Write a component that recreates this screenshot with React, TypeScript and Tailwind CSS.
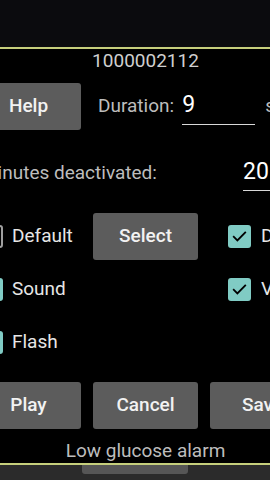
const Check = ({ on }: { on: boolean }) =>
  on ? (
    <div className="flex h-[23px] w-[23px] shrink-0 items-center justify-center rounded-[3px] bg-[#80cbc4]">
      <svg width="17" height="17" viewBox="0 0 24 24">
        <path d="M4 12.5l5 5L20 6.5" fill="none" stroke="#000" strokeWidth="2.6" strokeLinecap="square" />
      </svg>
    </div>
  ) : (
    <div className="h-[23px] w-[23px] shrink-0 rounded-[3px] border-2 border-[#9e9e9e]" />
  );

const Btn = ({ label }: { label: string }) => (
  <div className="flex h-[47px] w-[105px] shrink-0 items-center justify-center rounded-[3px] bg-[#5c5c5c] text-[19px] font-medium text-[#f2f2f2]">
    {label}
  </div>
);

export default function App() {
  return (
    <div
      className="h-[480px] w-[270px] overflow-hidden bg-black"
      style={{ fontFamily: "Roboto, 'Noto Sans', sans-serif" }}
    >
      <div className="h-[47px] bg-[#0b0b0e]" />
      <div className="h-[2px] bg-[#c6cf7c]" />
      <div className="ml-[-24px] w-[339px]">
        <div className="h-[24px] text-center text-[19px] leading-[24px] text-[#cfcfcf]">
          1000002112
        </div>

        {/* duration */}
        <div className="mt-[10px] flex h-[47px] items-start">
          <Btn label="Help" />
          <span className="ml-[17px] mt-[11px] shrink-0 text-[19px] leading-[24px] text-[#bdbdbd]">Duration:</span>
          <div className="ml-[8px] mt-[8px] w-[73px] shrink-0 border-b-[1.5px] border-[#d8d8d8] pb-[5px] text-[23px] leading-[28px] text-white">
            9
          </div>
          <span className="ml-[10px] mt-[11px] shrink-0 text-[19px] leading-[24px] text-[#bdbdbd]">sec</span>
        </div>

        <div className="mt-[20px] flex h-[46px] items-start">
          <span className="ml-[5px] mt-[11px] w-[238px] shrink-0 text-[19px] leading-[24px] text-[#bdbdbd]">
            Minutes deactivated:
          </span>
          <div className="ml-[24px] mt-[8px] w-[70px] shrink-0 border-b-[1.5px] border-[#d8d8d8] pb-[4px] text-[23px] leading-[28px] text-white">
            20
          </div>
        </div>

        {/* options */}
        <div className="mt-[14px] flex h-[53px] items-center">
          <div className="ml-[4px]">
            <Check on={false} />
          </div>
          <span className="ml-[9px] w-[81px] shrink-0 text-[19px] text-[#e6e6e6]">Default</span>
          <Btn label="Select" />
          <div className="ml-[30px]">
            <Check on />
          </div>
          <span className="ml-[10px] shrink-0 text-[19px] text-[#e6e6e6]">Display</span>
        </div>
        <div className="flex h-[53px] items-center">
          <div className="ml-[4px]">
            <Check on />
          </div>
          <span className="ml-[9px] w-[216px] shrink-0 text-[19px] text-[#e6e6e6]">Sound</span>
          <Check on />
          <span className="ml-[10px] shrink-0 text-[19px] text-[#e6e6e6]">Vibrate</span>
        </div>
        <div className="flex h-[53px] items-center">
          <div className="ml-[4px]">
            <Check on />
          </div>
          <span className="ml-[9px] text-[19px] text-[#e6e6e6]">Flash</span>
        </div>

        <div className="mt-[13px] grid grid-cols-[105px_105px_105px] gap-[12px]">
          <Btn label="Play" />
          <Btn label="Cancel" />
          <Btn label="Save" />
        </div>

        <div className="mt-[10px] h-[24px] text-center text-[19px] leading-[24px] text-[#bdbdbd]">
          Low glucose alarm
        </div>
      </div>
      <div className="h-[2px] bg-[#c6cf7c]" />
      <div className="flex h-[15px] justify-center bg-[#2b2b2b]">
        <div className="h-[9px] w-[106px] rounded-b-[3px] bg-[#565656]" />
      </div>
    </div>
  );
}
